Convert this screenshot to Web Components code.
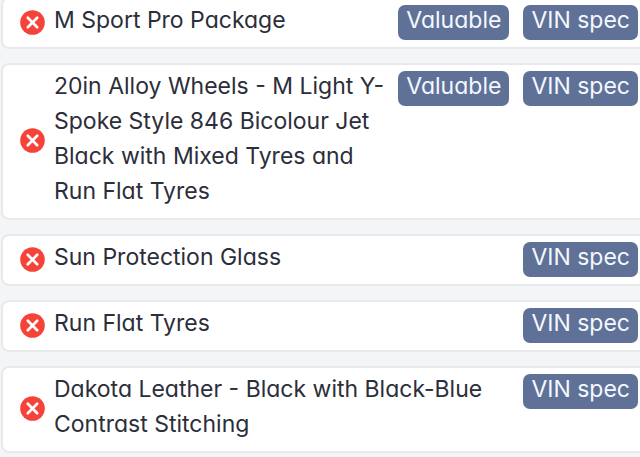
<!DOCTYPE html>
<html lang="en">
<head>
<meta charset="utf-8">
<meta name="viewport" content="width=device-width, initial-scale=1">
<title>Vehicle options</title>
<style>
html { background: #f4f5f7; }
body { margin: 0; overflow: hidden; font-family: Inter, "Liberation Sans", sans-serif; font-size: 23px; line-height: 35px; color: #2c2e3a; font-feature-settings: "cv11" 1; }
</style>
</head>
<body>
<option-list>
  <option-card>M Sport Pro Package<spec-badge slot="badges">Valuable</spec-badge><spec-badge slot="badges">VIN spec</spec-badge></option-card>
  <option-card>20in Alloy Wheels - M Light Y-Spoke Style 846 Bicolour Jet Black with Mixed Tyres and Run Flat Tyres<spec-badge slot="badges">Valuable</spec-badge><spec-badge slot="badges">VIN spec</spec-badge></option-card>
  <option-card>Sun Protection Glass<spec-badge slot="badges">VIN spec</spec-badge></option-card>
  <option-card>Run Flat Tyres<spec-badge slot="badges">VIN spec</spec-badge></option-card>
  <option-card>Dakota Leather - Black with Black-Blue Contrast Stitching<spec-badge slot="badges">VIN spec</spec-badge></option-card>
</option-list>
<script>
const define = (name, html) => customElements.define(name, class extends HTMLElement {
  constructor() {
    super();
    this.attachShadow({ mode: 'open' }).innerHTML = html;
  }
});

define('option-list', `
  <style>
    :host { display: flex; flex-direction: column; gap: 14px; margin: -3px -14px 0 1px; }
  </style>
  <slot></slot>`);

define('status-icon', `
  <style>
    :host { display: block; flex: none; width: 25px; height: 25px; }
    svg { display: block; width: 100%; height: 100%; }
  </style>
  <svg viewBox="0 0 25 25" role="img" aria-label="Not included">
    <circle cx="12.5" cy="12.5" r="12.3" fill="#f5433a"/>
    <path d="M7.8 7.8 17.2 17.2M17.2 7.8 7.8 17.2" stroke="#fff" stroke-width="2.7" stroke-linecap="round"/>
  </svg>`);

define('spec-badge', `
  <style>
    :host { display: block; box-sizing: border-box; height: 35px; padding: 0 8px; border-radius: 7px; background: #607198; color: #f3f8ff; line-height: 30px; white-space: nowrap; }
  </style>
  <slot></slot>`);

define('option-card', `
  <style>
    :host { display: flex; align-items: center; box-sizing: border-box; padding: 4px 14px 9px 17px; border: 2px solid #e8e9eb; border-radius: 8px; background: #fff; }
    status-icon { margin-top: 3px; }
    .label { flex: 1; min-width: 0; margin-left: 9px; }
    .badges { display: flex; gap: 14px; align-self: flex-start; margin: 2px 0 -2px 12px; }
  </style>
  <status-icon></status-icon>
  <div class="label"><slot></slot></div>
  <div class="badges"><slot name="badges"></slot></div>`);
</script>
</body>
</html>
